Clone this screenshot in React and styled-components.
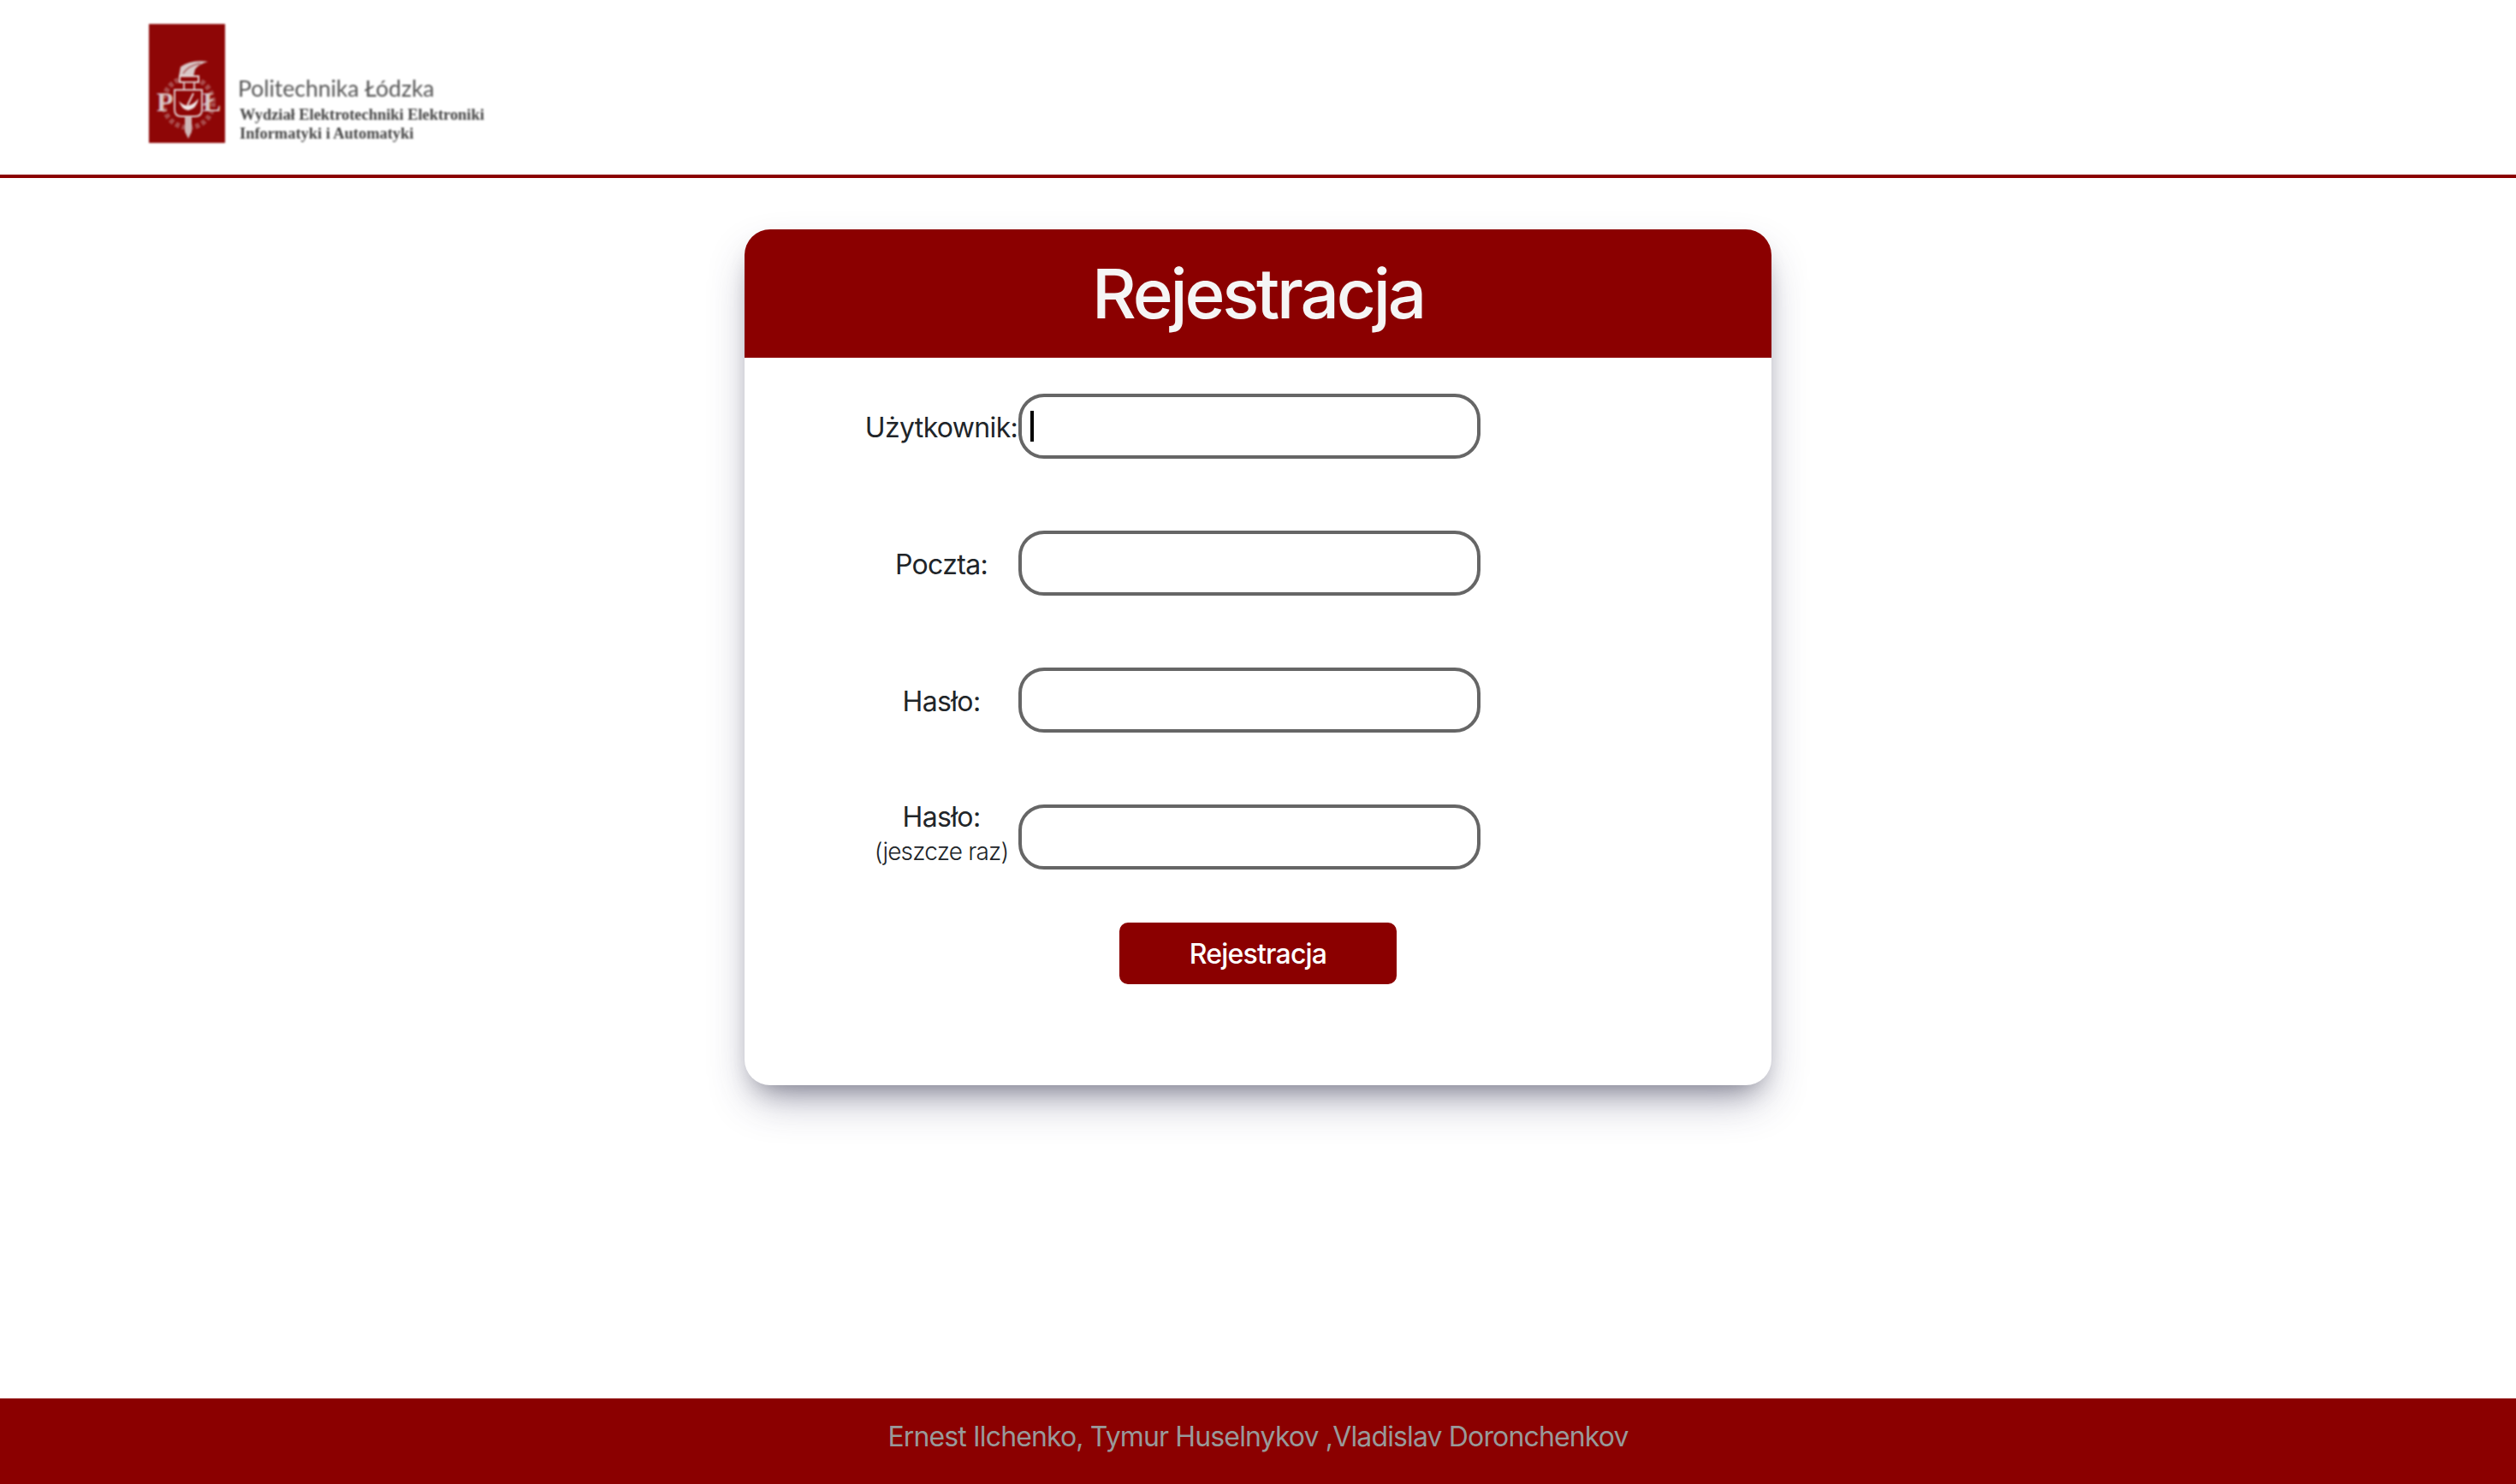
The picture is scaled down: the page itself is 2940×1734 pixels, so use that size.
import React from "react";
import styled, { createGlobalStyle } from "styled-components";

const GlobalStyle = createGlobalStyle`
  html, body {
    margin: 0;
    padding: 0;
    background: #fff;
    font-family: "Inter", "Liberation Sans", sans-serif;
    color: #212529;
  }
`;

const Page = styled.div`
  min-height: 1734px;
  display: flex;
  flex-direction: column;
`;

const Header = styled.header`
  height: 208px;
  box-sizing: border-box;
  border-bottom: 4px solid #8b0000;
  padding: 28px 0 0 174px;
`;

const Logo = styled.div`
  display: flex;
  align-items: flex-end;
  height: 139px;
  filter: blur(0.8px);
`;

const LogoText = styled.div`
  margin-left: 16px;
  display: flex;
  flex-direction: column;
`;

const LogoName = styled.span`
  font-family: "Lato", sans-serif;
  font-size: 26.5px;
  line-height: 34px;
  color: #555;
  margin-left: -1px;
  margin-bottom: 3px;
`;

const LogoFaculty = styled.span`
  font-family: "Liberation Serif", serif;
  font-weight: bold;
  font-size: 18.4px;
  line-height: 22px;
  color: #444;
  margin-left: 1px;
  white-space: nowrap;
`;

const Main = styled.main`
  flex: 1;
  display: flex;
  justify-content: center;
  align-items: flex-start;
  padding-top: 60px;
`;

const Card = styled.section`
  width: 1200px;
  height: 1000px;
  border-radius: 30px;
  background: #fff;
  overflow: hidden;
  box-shadow: rgba(50, 50, 93, 0.42) 0 24px 50px -10px,
    rgba(0, 0, 0, 0.4) 0 16px 30px -16px;
`;

const CardTitle = styled.h1`
  margin: 0;
  height: 150px;
  background: #8b0000;
  color: #f5f5f5;
  font-size: 80px;
  font-weight: 500;
  letter-spacing: -3.2px;
  line-height: 150px;
  text-align: center;
`;

const Form = styled.form`
  padding-top: 42px;
  display: flex;
  flex-direction: column;
  align-items: center;
`;

const Fields = styled.div`
  align-self: flex-start;
  padding-left: 140px;
  display: flex;
  flex-direction: column;
  gap: 84px;
`;

const Row = styled.div`
  display: flex;
  align-items: center;
  height: 76px;
`;

const Label = styled.label`
  width: 180px;
  padding: ${(p) => (p.$raised ? "0 0 6px" : "3px 0 0")};
  text-align: center;
  font-size: 32px;
  letter-spacing: -0.65px;
  line-height: 40px;
  white-space: nowrap;
  display: block;
`;

const LabelNote = styled.small`
  display: block;
  font-size: 28px;
  font-weight: 300;
  letter-spacing: -0.8px;
  line-height: 40px;
`;

const InputWrap = styled.div`
  position: relative;
`;

const Input = styled.input`
  display: block;
  box-sizing: border-box;
  width: 540px;
  height: 76px;
  padding: 0 12px;
  border: 4px solid #666;
  border-radius: 30px;
  background: #fff;
  outline: none;
`;

const Caret = styled.span`
  position: absolute;
  left: 14px;
  top: 20px;
  width: 4px;
  height: 36px;
  background: #000;
`;

const Submit = styled.button`
  width: 324px;
  height: 72px;
  margin-top: 62px;
  border: none;
  border-radius: 10px;
  background: #8b0000;
  color: #fff;
  font-family: inherit;
  font-size: 32px;
  font-weight: 500;
  letter-spacing: -0.8px;
`;

const Footer = styled.footer`
  height: 100px;
  background: #8b0000;
  color: #999;
  font-size: 32px;
  letter-spacing: -0.86px;
  line-height: 90px;
  text-align: center;
`;

function Emblem() {
  return (
    <svg width="89" height="139" viewBox="0 0 89 139">
      <rect width="89" height="139" fill="#8e0606" />
      <circle cx="46" cy="92" r="29" fill="none" stroke="#a94c4c" strokeWidth="6" strokeDasharray="5 3" />
      <path d="M35 61 L37 50 Q50 41 69 44 Q58 47 54 53 L52 61 Z" fill="#d9c8c8" />
      <path d="M40 58 Q45 49 60 46" fill="none" stroke="#a55" strokeWidth="1.5" />
      <rect x="36" y="61" width="22" height="7" fill="#8e0606" stroke="#e5d5d5" strokeWidth="2" />
      <rect x="41" y="68" width="12" height="9" fill="#8e0606" stroke="#d9c0c0" strokeWidth="2" />
      <path d="M30 77 H62 V100 Q62 108 54 108 H38 Q30 108 30 100 Z" fill="#8e0606" stroke="#e0cccc" strokeWidth="2" />
      <path d="M35 90 Q46 102 58 87 Q56 99 46 101 Q38 100 35 90 Z" fill="#f0e6e6" />
      <path d="M45 95 L52 81" stroke="#f0e6e6" strokeWidth="1.8" />
      <path d="M42 108 H50 V126 L46 134 L42 126 Z" fill="#cfb5b5" />
      <text x="9" y="102" fontFamily="Liberation Serif" fontWeight="bold" fontSize="32" fill="#d8c4c4">P</text>
      <text x="63" y="102" fontFamily="Liberation Serif" fontWeight="bold" fontSize="32" fill="#d8c4c4">Ł</text>
    </svg>
  );
}

const fields = [
  { id: "user", label: "Użytkownik:", focused: true },
  { id: "mail", label: "Poczta:" },
  { id: "pass", label: "Hasło:" },
  { id: "pass2", label: "Hasło:", note: "(jeszcze raz)" },
];

export default function App() {
  return (
    <Page>
      <GlobalStyle />
      <Header>
        <Logo>
          <Emblem />
          <LogoText>
            <LogoName>Politechnika Łódzka</LogoName>
            <LogoFaculty>Wydział Elektrotechniki Elektroniki</LogoFaculty>
            <LogoFaculty>Informatyki i Automatyki</LogoFaculty>
          </LogoText>
        </Logo>
      </Header>
      <Main>
        <Card>
          <CardTitle>Rejestracja</CardTitle>
          <Form onSubmit={(e) => e.preventDefault()}>
            <Fields>
              {fields.map((f) => (
                <Row key={f.id}>
                  <Label htmlFor={f.id} $raised={!!f.note}>
                    {f.label}
                    {f.note && <LabelNote>{f.note}</LabelNote>}
                  </Label>
                  <InputWrap>
                    <Input id={f.id} />
                    {f.focused && <Caret />}
                  </InputWrap>
                </Row>
              ))}
            </Fields>
            <Submit type="submit">Rejestracja</Submit>
          </Form>
        </Card>
      </Main>
      <Footer>Ernest Ilchenko, Tymur Huselnykov ,Vladislav Doronchenkov</Footer>
    </Page>
  );
}
